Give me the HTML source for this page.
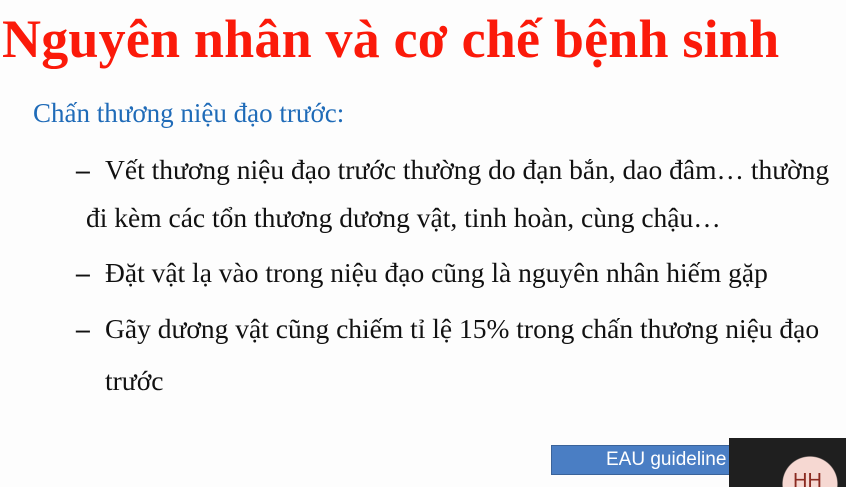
<!DOCTYPE html>
<html><head><meta charset="utf-8"><style>
html,body{margin:0;width:846px;height:487px;overflow:hidden}
body{background:#fdfdfd;position:relative;font-family:"Liberation Serif",serif}
.t{position:absolute;left:2px;top:8px;font-size:54px;font-weight:bold;color:#fb1a0a;white-space:nowrap;letter-spacing:0.2px}
.s{position:absolute;left:33px;top:98px;font-size:27px;color:#1f6bb8;white-space:nowrap}
.l{position:absolute;font-size:27.5px;color:#111;white-space:nowrap}
.d{position:absolute;left:76px;font-size:27.5px;color:#111;font-weight:bold}
.b{position:absolute;left:551px;top:445px;width:184px;height:30px;background:#4a7ec4;border:1px solid #3a639a;box-sizing:border-box;color:#fff;font-family:"Liberation Sans",sans-serif;font-size:19px;line-height:28px;padding-left:54px;white-space:nowrap;overflow:hidden}
.k{position:absolute;left:729px;top:438px;width:117px;height:49px;background:radial-gradient(circle at 81px 46px,#f6d8d2 27px,#1f1f1f 28px);color:#8a2a20;font-family:"Liberation Sans",sans-serif;font-size:20px;line-height:20px;overflow:hidden}
.c{position:absolute;left:64px;top:33px;}
</style></head><body>
<div class="t">Nguyên nhân và cơ chế bệnh sinh</div>
<div class="s">Chấn thương niệu đạo trước:</div>
<div class="d" style="top:154px">–</div>
<div class="l" style="left:105px;top:154px">Vết thương niệu đạo trước thường do đạn bắn, dao đâm… thường</div>
<div class="l" style="left:86px;top:202px">đi kèm các tổn thương dương vật, tinh hoàn, cùng chậu…</div>
<div class="d" style="top:257px">–</div>
<div class="l" style="left:105px;top:257px">Đặt vật lạ vào trong niệu đạo cũng là nguyên nhân hiếm gặp</div>
<div class="d" style="top:313px">–</div>
<div class="l" style="left:105px;top:313px">Gãy dương vật cũng chiếm tỉ lệ 15% trong chấn thương niệu đạo</div>
<div class="l" style="left:105px;top:365px">trước</div>
<div class="b">EAU guideline</div>
<div class="k"><span class="c">HH</span></div>
</body></html>
